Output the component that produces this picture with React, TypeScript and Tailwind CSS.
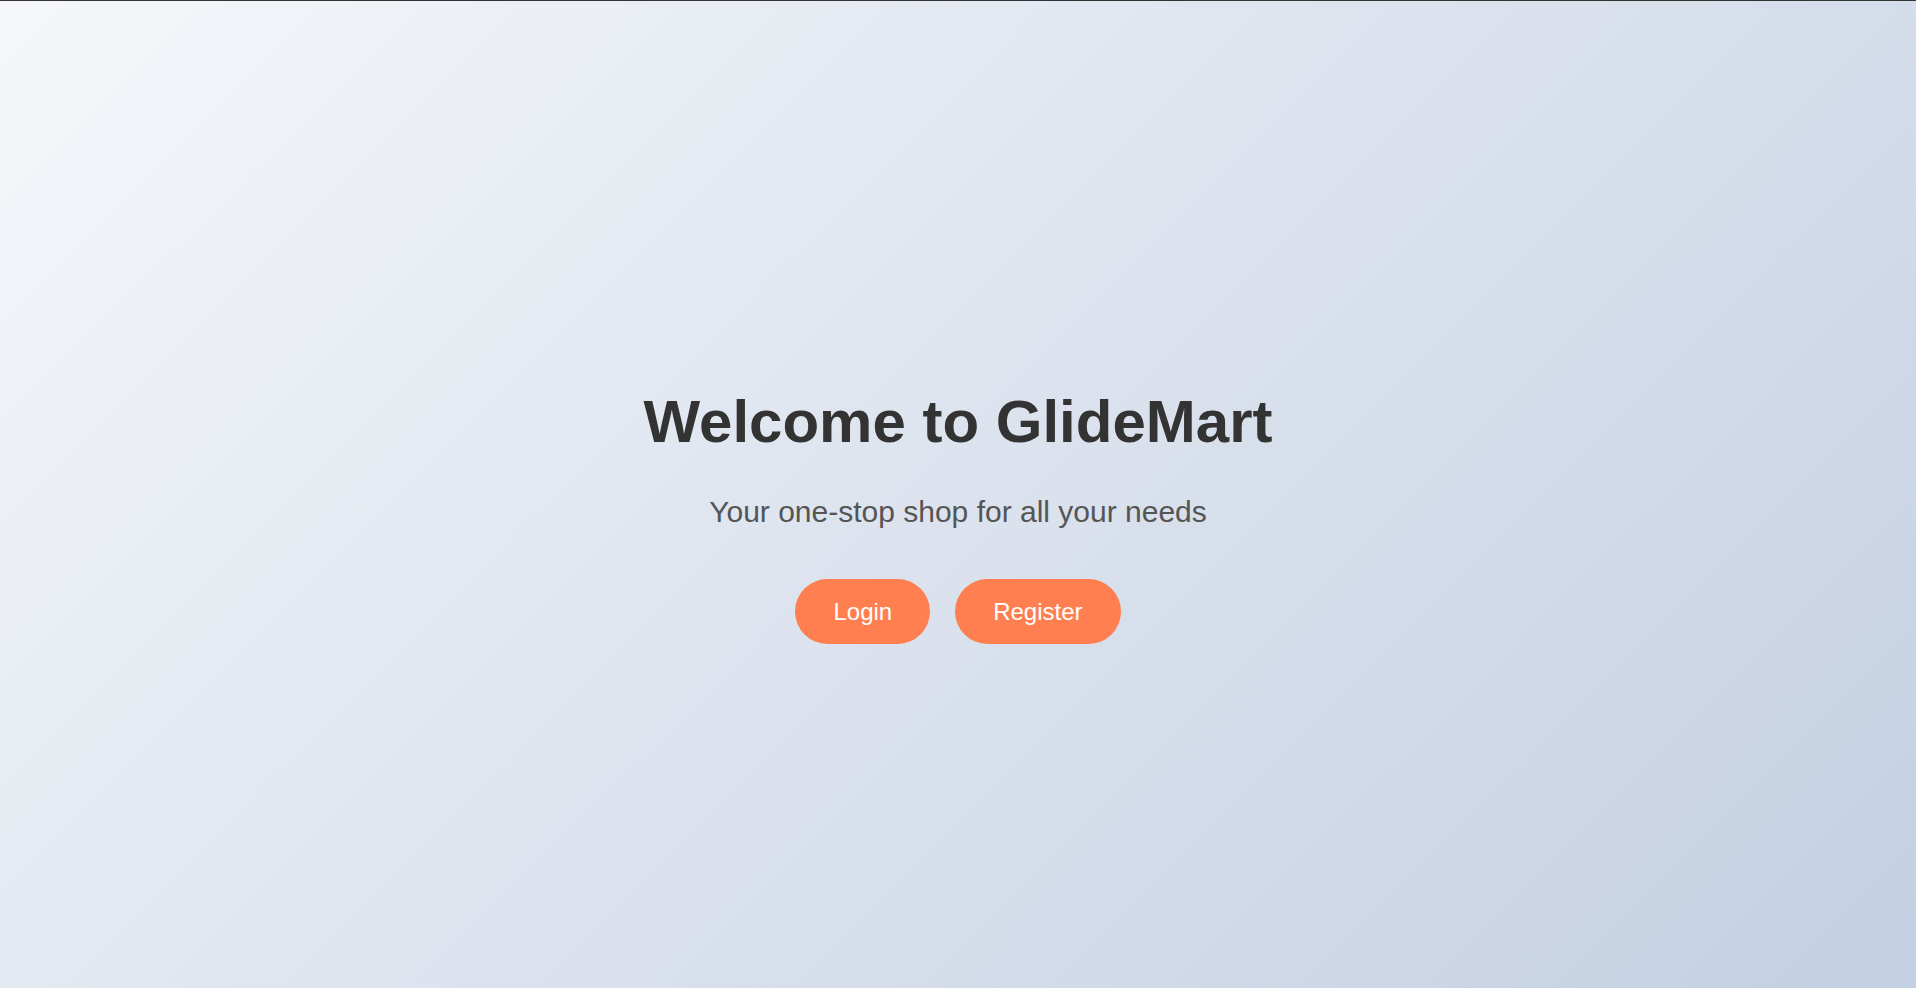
export default function App() {
  return (
    <div
      className="min-h-screen h-[988px] w-full border-t border-[#333333] bg-[linear-gradient(135deg,#f5f7fa_0%,#c3cfe2_100%)] flex flex-col items-center justify-center pt-[42px]"
      style={{ fontFamily: '"Liberation Sans", Arial, sans-serif' }}
    >
      <h1 className="text-[60px] leading-[70px] font-bold text-[#333333] m-0">
        Welcome to GlideMart
      </h1>
      <p className="mt-[38px] text-[30px] leading-[34px] text-[#555555]">
        Your one-stop shop for all your needs
      </p>
      <div className="mt-[50px] flex gap-[25px]">
        <button className="h-[65px] px-[38px] rounded-full bg-[#ff7f50] text-white text-[24px] leading-[27px] flex items-center">
          Login
        </button>
        <button className="h-[65px] px-[38px] rounded-full bg-[#ff7f50] text-white text-[24px] leading-[27px] flex items-center">
          Register
        </button>
      </div>
    </div>
  );
}
